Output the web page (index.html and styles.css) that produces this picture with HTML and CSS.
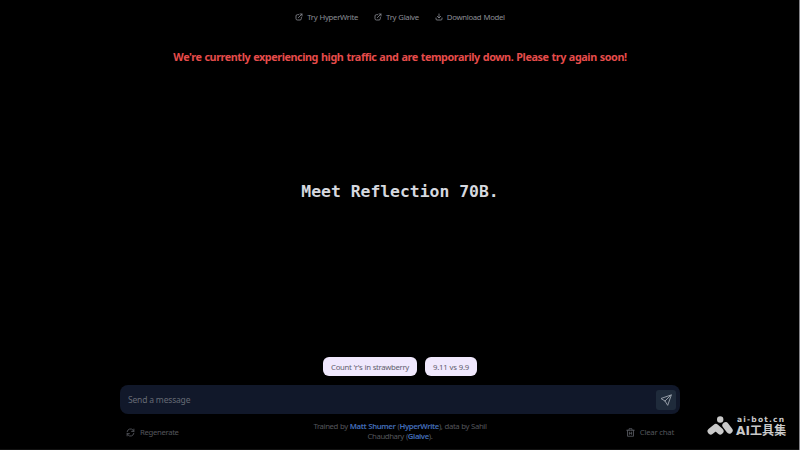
FILE: index.html
```html
<!DOCTYPE html>
<html lang="en">
<head>
<meta charset="utf-8">
<title>Reflection 70B</title>
<link rel="stylesheet" href="styles.css">
</head>
<body>
<div class="page">
  <nav class="links">
    <a class="link"><svg class="icon" viewBox="0 0 24 24"><path d="M11 5H7a4 4 0 0 0-4 4v8a4 4 0 0 0 4 4h8a4 4 0 0 0 4-4v-4M15 3h6v6M21 3l-11 11"/></svg><span>Try HyperWrite</span></a>
    <a class="link"><svg class="icon" viewBox="0 0 24 24"><path d="M11 5H7a4 4 0 0 0-4 4v8a4 4 0 0 0 4 4h8a4 4 0 0 0 4-4v-4M15 3h6v6M21 3l-11 11"/></svg><span>Try Glaive</span></a>
    <a class="link"><svg class="icon" viewBox="0 0 24 24"><path d="M12 3v11M7 10l5 5 5-5M3 15v3a3 3 0 0 0 3 3h12a3 3 0 0 0 3-3v-3"/></svg><span>Download Model</span></a>
  </nav>
  <p class="alert">We're currently experiencing high traffic and are temporarily down. Please try again soon!</p>
  <main class="hero"><h1 class="title">Meet Reflection 70B.</h1></main>
  <div class="prompts">
    <button class="prompt count">Count 'r's in strawberry</button>
    <button class="prompt versus">9.11 vs 9.9</button>
  </div>
  <div class="composer">
    <span class="placeholder">Send a message</span>
    <button class="send"><svg class="plane" viewBox="0 0 24 24"><path d="M22 2L2 9l8 5 5 8zM22 2L10 14"/></svg></button>
  </div>
  <footer class="footer">
    <div class="action"><svg class="refresh" viewBox="0 0 24 24"><path d="M3 10a9 9 0 0 1 16-4l2 3M21 3v6h-6M21 14a9 9 0 0 1-16 4l-2-3M3 21v-6h6"/></svg><span>Regenerate</span></div>
    <p class="credit">Trained by <b>Matt Shumer</b> (<b>HyperWrite</b>), data by Sahil<br>Chaudhary (<b>Glaive</b>).</p>
    <div class="action clear"><svg class="trash" viewBox="0 0 24 24"><path d="M2 6h20M8 6V2h8v4M4 6v16h16V6M9 11v6M15 11v6M9 14h6"/></svg><span>Clear chat</span></div>
  </footer>
</div>
<div class="watermark">
  <svg class="mark" viewBox="0 0 26 19"><circle cx="13.2" cy="3.5" r="3.2"/><path d="M3.8 15.2l5-4 4.5 4M18.6 9.4l3.8 5"/></svg>
  <div class="brand"><span class="domain">ai-bot.cn</span><span class="name">AI工具集</span></div>
</div>
</body>
</html>
```
FILE: styles.css
```css
* { box-sizing: border-box; }
body { margin: 0; background: #000; font-family: "Noto Sans", "Noto Sans CJK SC", sans-serif; }
.page { width: 800px; height: 450px; display: flex; flex-direction: column; align-items: center; overflow: hidden; box-shadow: inset -1px 0 #85858a, inset 0 -1px #121212; }
svg { fill: none; stroke: currentColor; stroke-width: 2; stroke-linecap: round; stroke-linejoin: round; flex: none; }
button { border: 0; padding: 0; font: inherit; }
.links { height: 34px; display: flex; align-items: center; gap: 16px; color: #8b8d95; font-size: 7.75px; letter-spacing: -.3px; word-spacing: .4px; white-space: nowrap; }
.link { display: flex; align-items: center; gap: 4px; }
.icon { width: 8px; height: 8px; stroke-width: 2.4; }
.alert { margin: 0; height: 46px; line-height: 46px; font-size: 10.8px; font-weight: 700; letter-spacing: -.42px; word-spacing: .6px; color: #e64c4b; white-space: nowrap; }
.hero { height: 277px; padding-top: 98px; }
.title { margin: 0; font: bold 16.4px/28px "DejaVu Sans Mono", monospace; color: #d5d8df; white-space: nowrap; }
.prompts { display: flex; gap: 8px; height: 28px; }
.prompt { height: 19px; border-radius: 6px; background: #f0e8fd; color: #625e6d; font-size: 7.75px; letter-spacing: -.33px; word-spacing: .4px; white-space: nowrap; }
.count { width: 94px; }
.versus { width: 52px; letter-spacing: -.25px; }
.composer { width: 560px; height: 29px; padding: 0 4px 0 8px; border-radius: 8px; background: #11182a; display: flex; align-items: center; justify-content: space-between; color: #666b75; font-size: 8.5px; letter-spacing: -.18px; }
.placeholder { position: relative; top: -.5px; }
.send { width: 20px; height: 20px; border-radius: 3px; background: #1f2b3b; color: #939ba5; display: grid; place-items: center; }
.plane { width: 12px; height: 12px; }
.footer { width: 560px; padding: 7px 6px 0; display: grid; grid-template-columns: 1fr 180px 1fr; color: #54565c; font-size: 7.75px; letter-spacing: -.34px; white-space: nowrap; }
.action { display: flex; height: 22px; align-items: center; gap: 5px; }
.clear { justify-content: flex-end; letter-spacing: -.22px; }
.refresh, .trash { width: 9px; height: 9px; stroke-width: 2.4; }
.credit { margin: 0; line-height: 10px; text-align: center; letter-spacing: -.39px; word-spacing: .4px; }
.credit b { color: #426db8; font-weight: 600; }
.watermark { position: absolute; left: 707px; top: 415px; display: flex; align-items: center; gap: 3px; color: #c9c9c9; }
.mark { width: 26px; height: 19px; }
.mark circle { fill: currentColor; stroke: none; }
.mark path { stroke-width: 6.5; }
.brand { display: flex; flex-direction: column; white-space: nowrap; font-weight: 700; }
.domain { height: 10px; font: bold 7.5px/9px "DejaVu Sans", sans-serif; letter-spacing: 1.2px; padding-left: 1px; }
.name { height: 11px; font: bold 12px/12px "DejaVu Sans", "Noto Sans CJK SC", sans-serif; letter-spacing: .1px; }
```
